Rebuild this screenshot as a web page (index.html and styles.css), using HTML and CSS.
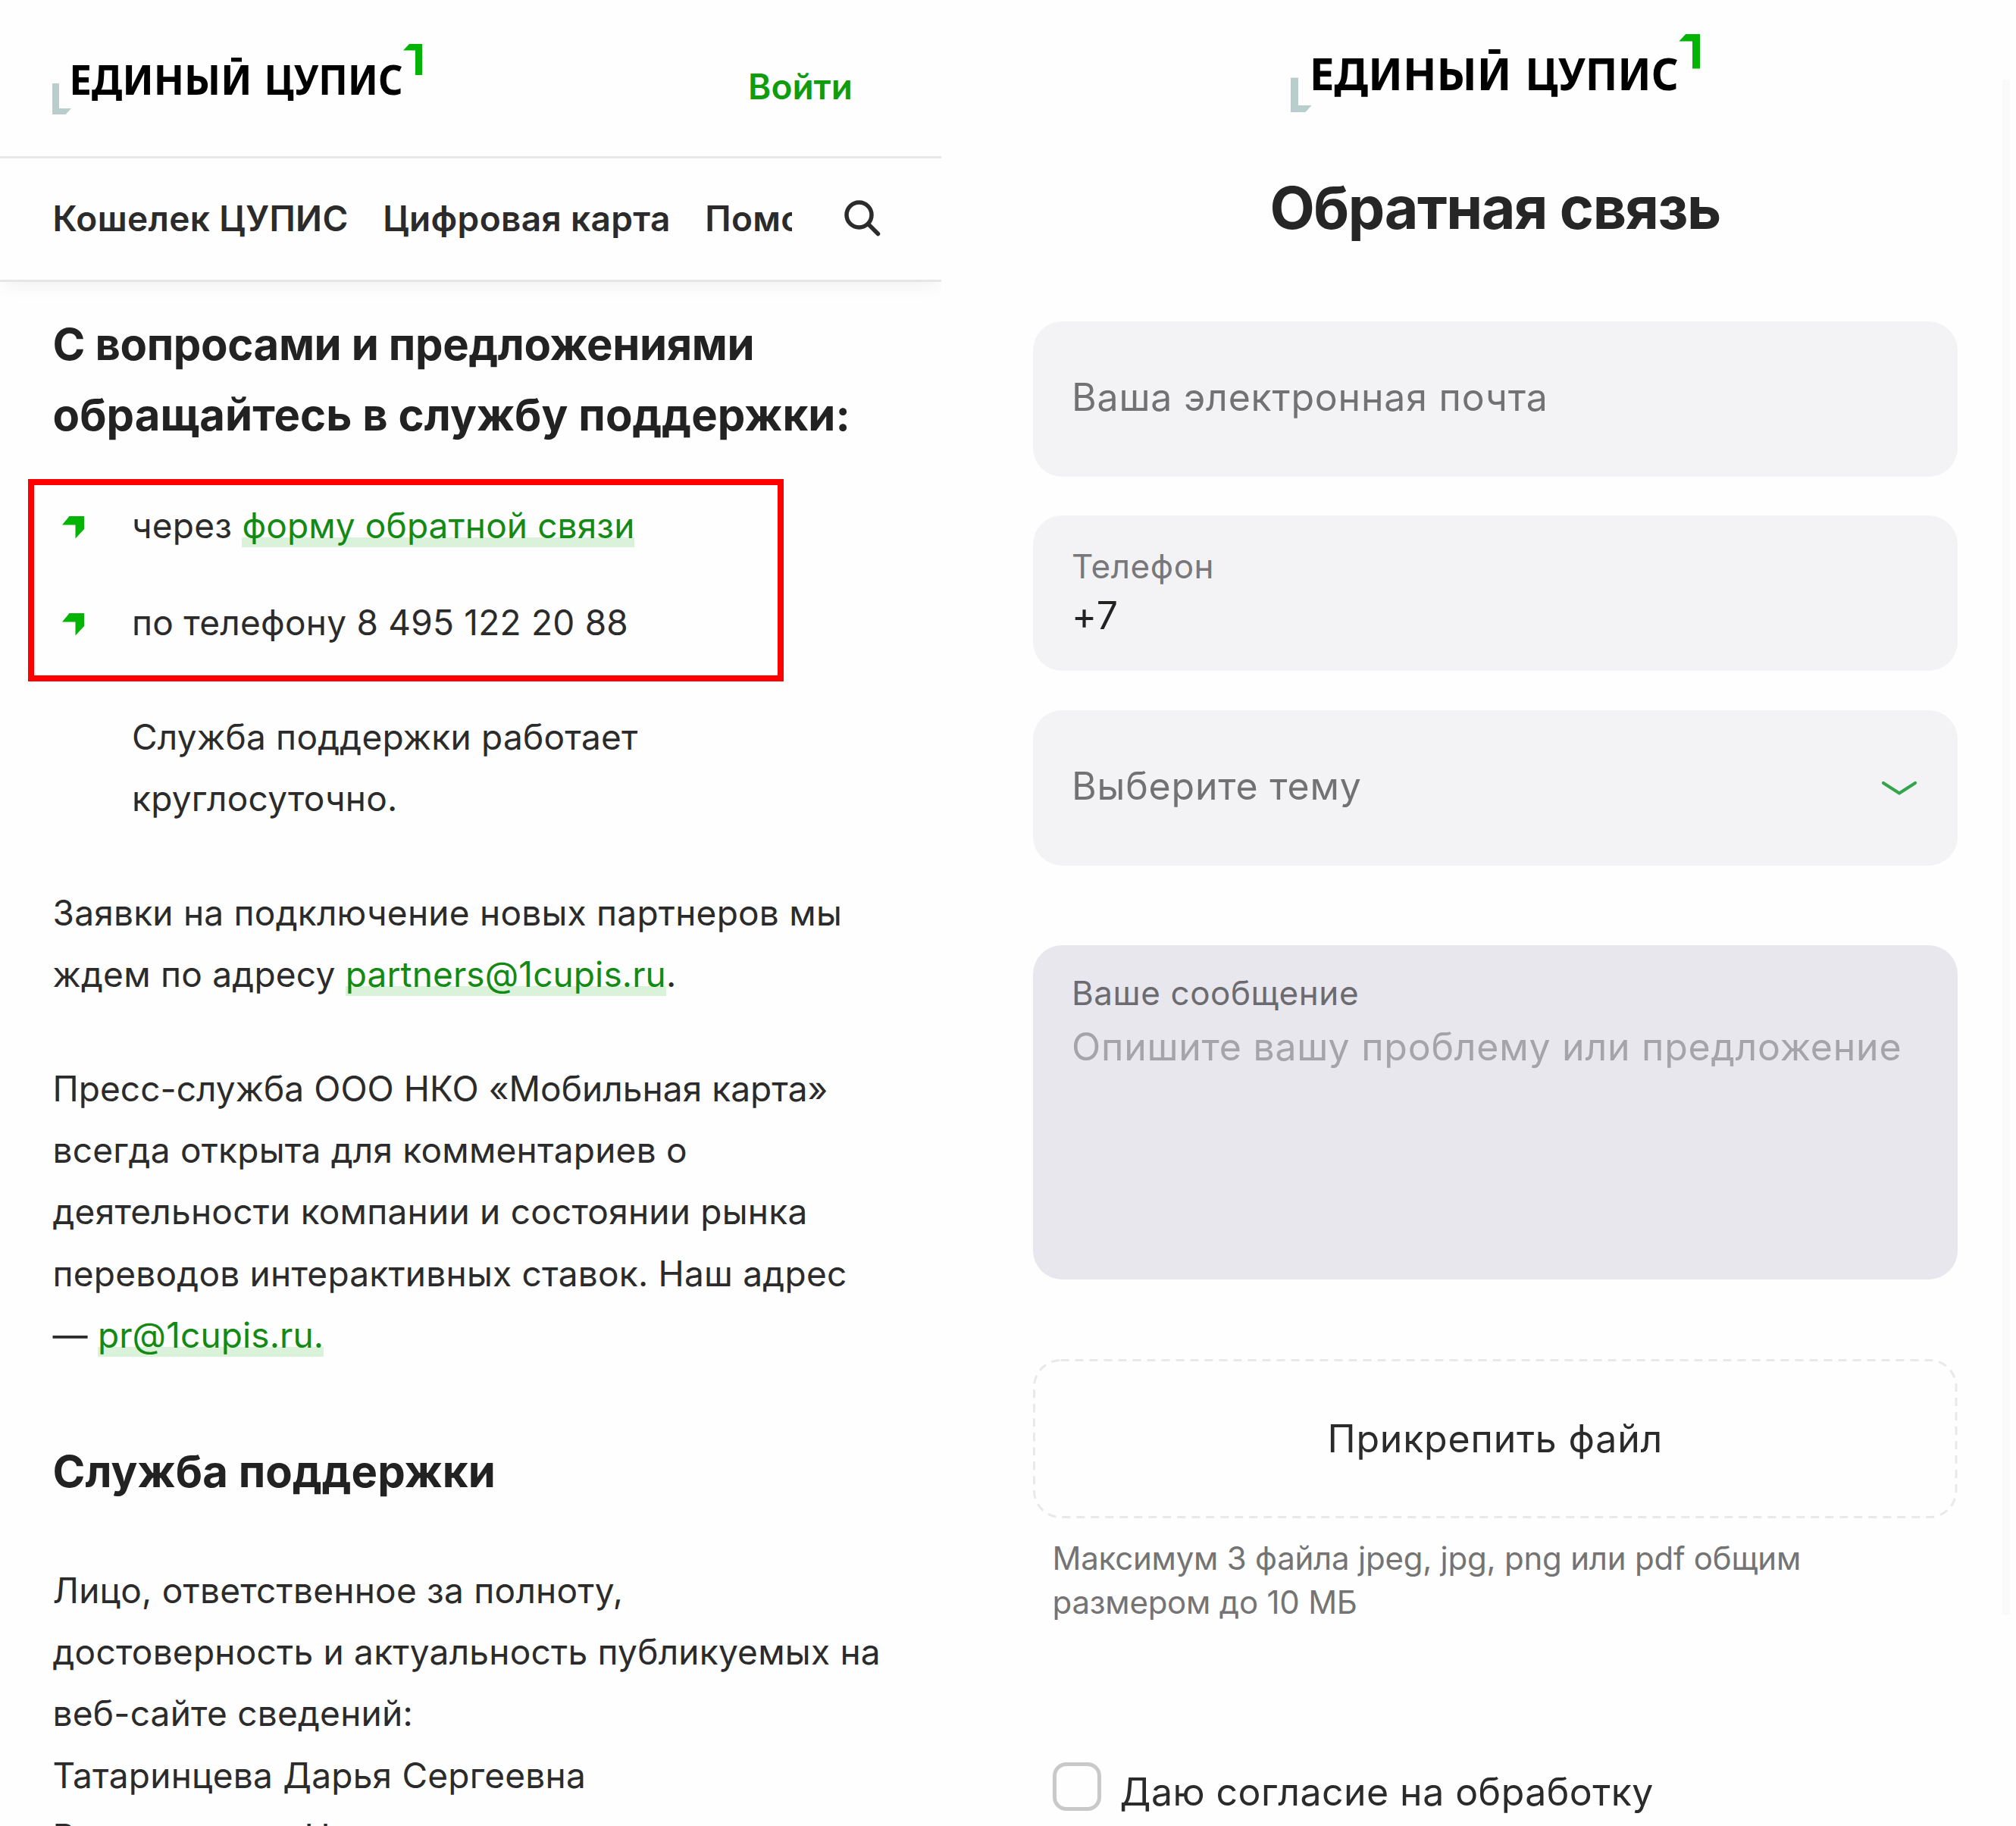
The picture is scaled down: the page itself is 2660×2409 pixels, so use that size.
FILE: index.html
```html
<!DOCTYPE html>
<html lang="ru">
<head>
<meta charset="utf-8">
<title>Единый ЦУПИС</title>
<link rel="stylesheet" href="styles.css">
</head>
<body>
<svg class="sprite" aria-hidden="true">
  <symbol id="logo" viewBox="0 0 488 93">
    <path fill="#b9cdcd" d="M0 52h9v33h16l-7.500 8H0z"/>
    <text class="logo-text" x="22.500" y="66.500" textLength="241" lengthAdjust="spacingAndGlyphs">ЕДИНЫЙ</text>
    <text class="logo-text" x="279.500" y="66.500" textLength="183" lengthAdjust="spacingAndGlyphs">ЦУПИС</text>
    <!-- flat accent over the letter -->
    <path fill="#fefefe" d="M228 8h30v19h-30z"/>
    <path fill="#000" d="M236 18h14v5.500h-14z"/>
    <path fill="#04b404" d="M471 0h17v41h-9V8.500h-16z"/>
  </symbol>
  <symbol id="marker" viewBox="0 0 30 30">
    <path fill="#04b404" d="M0 11.500 9.500 0H29v17L17.500 29.500V11.500z"/>
  </symbol>
</svg>
<div class="screens">
  <section class="info">
    <header class="topbar">
      <svg class="logo"><use href="#logo"/></svg>
      <a class="login">Войти</a>
    </header>
    <nav class="nav">
      <div class="nav-items">
        <a>Кошелек ЦУПИС</a>
        <a>Цифровая карта</a>
        <a>Помощь</a>
      </div>
      <svg class="search" viewBox="0 0 48 48" fill="none" stroke="#2b2b2b" stroke-width="5.500" stroke-linecap="round"><circle cx="19.500" cy="19.500" r="16.500"/><path d="M31.500 31.500 44.500 44.500"/></svg>
    </nav>
    <main class="content">
      <h2><span class="tight">С вопросами и предложениями</span><br>обращайтесь в службу поддержки:</h2>
      <ul class="contacts">
        <li><svg class="marker"><use href="#marker"/></svg><span>через <a class="link">форму обратной связи</a></span></li>
        <li><svg class="marker"><use href="#marker"/></svg><span>по телефону 8 495 122 20 88</span></li>
      </ul>
      <p class="note">Служба поддержки работает<br>круглосуточно.</p>
      <p>Заявки на подключение новых партнеров мы<br>ждем по адресу <a class="link">partners@1cupis.ru</a>.</p>
      <p><span class="natural">Пресс-служба ООО НКО «Мобильная карта»</span><br>всегда открыта для комментариев о<br>деятельности компании и состоянии рынка<br>переводов интерактивных ставок. Наш адрес<br>— <a class="link">pr@1cupis.ru.</a></p>
      <h2 class="second">Служба поддержки</h2>
      <p>Лицо, ответственное за полноту,<br>достоверность и актуальность публикуемых на<br>веб-сайте сведений:<br>Татаринцева Дарья Сергеевна<br>Руководитель Н</p>
    </main>
  </section>
  <section class="feedback">
    <svg class="logo logo-large"><use href="#logo"/></svg>
    <h1>Обратная связь</h1>
    <form class="form">
      <div class="field"><span class="placeholder">Ваша электронная почта</span></div>
      <div class="field filled"><span class="label">Телефон</span><span class="value">+7</span></div>
      <div class="field"><span class="placeholder">Выберите тему</span>
        <svg class="chevron" viewBox="0 0 48 22" fill="none" stroke="#33a64c" stroke-width="4.200" stroke-linecap="round" stroke-linejoin="round"><path d="M3 4 24 17.500 45 4"/></svg></div>
      <div class="message"><span class="label">Ваше сообщение</span><span class="hint-text">Опишите вашу проблему или предложение</span></div>
      <div class="upload">
        <svg class="dashes" fill="none" stroke="#e9e9e9" stroke-width="3" stroke-dasharray="11 8"><rect x="1.500" y="1.500" width="1216.500" height="207" rx="35"/></svg>
        <span>Прикрепить файл</span>
      </div>
      <p class="limits">Максимум 3 файла jpeg, jpg, png или pdf общим<br>размером до 10 МБ</p>
      <label class="consent"><span class="checkbox"></span><span class="consent-text">Даю согласие на обработку</span></label>
    </form>
    <div class="scrollbar"></div>
  </section>
</div>
</body>
</html>
```

FILE: styles.css
```css
* { box-sizing: border-box; }
html, body { margin: 0; height: 2409px; overflow: hidden; }
body {
  background: #fefefe;
  color: #2b2b2b;
  font-family: Inter, "Liberation Sans", sans-serif;
}
h1, h2, p, ul { margin: 0; padding: 0; }
.sprite { position: absolute; width: 0; height: 0; }
.screens { display: flex; height: 2409px; overflow: hidden; }

.logo { display: block; width: 488px; height: 93px; flex: none; }
.logo-large { width: 540px; height: 103px; }
.logo-text { font: 700 53px "Noto Sans", sans-serif; fill: #000; }

/* Left screen: contacts page */
.info { width: 1242px; flex: none; }
.topbar {
  display: flex;
  justify-content: space-between;
  align-items: flex-start;
  height: 209px;
  padding: 58px 117px 0 69px;
  border-bottom: 3px solid #e8e8e8;
}
.login {
  margin-top: 27px;
  line-height: 58px;
  font-size: 46px;
  font-weight: 600;
  color: #0f9d0f;
}
.nav {
  display: flex;
  align-items: center;
  justify-content: space-between;
  height: 163px;
  padding: 0 80px 2px 69.500px;
  border-bottom: 3px solid #e6e6e6;
  box-shadow: 0 14px 20px -6px rgba(0, 0, 0, .045);
  clip-path: inset(0 0 -60px 0);
}
.nav-items {
  display: flex;
  gap: 45.500px;
  width: 975.500px;
  overflow: hidden;
  white-space: nowrap;
  font-size: 46px;
  font-weight: 600;
  line-height: 70px;
  letter-spacing: .0075em;
}
.search { width: 48px; height: 48px; flex: none; }
.content { padding: 36px 0 0 69.500px; font-size: 46px; line-height: 81.400px; letter-spacing: .005em; white-space: nowrap; }
h2 { font-size: 58px; line-height: 93px; font-weight: 700; letter-spacing: .001em; color: #222; }
.tight { letter-spacing: -.0064em; }
.natural { letter-spacing: .001em; }
.contacts {
  display: flex;
  flex-direction: column;
  gap: 46.600px;
  width: 997px;
  height: 267px;
  margin: 38px 0 33px -32.500px;
  padding: 12.600px 0 0 37px;
  border: 8px solid #f00;
  list-style: none;
}
.contacts li { display: flex; align-items: center; gap: 62px; }
.marker { width: 30px; height: 30px; margin-top: 6px; flex: none; }
.content p + p { margin-top: 69px; }
.content .note { padding-left: 104.500px; }
.content .second { margin: 92px 0 70px; }
.link {
  letter-spacing: .0025em;
  color: #138a13;
  background: linear-gradient(#d9f2d9, #d9f2d9) 0 100% / 100% 13px no-repeat;
  padding-bottom: 1px;
}

/* Right screen: feedback form */
.feedback {
  position: relative;
  flex: 1;
  display: flex;
  flex-direction: column;
  align-items: center;
  padding: 45px 78px 0 121px;
}
h1 { margin-top: 79px; font-size: 77px; line-height: 94px; font-weight: 700; letter-spacing: -.019em; color: #262626; }
.form { width: 1219.500px; margin: 102.500px 0 0; display: flex; flex-direction: column; }
.field {
  display: flex;
  align-items: center;
  justify-content: space-between;
  height: 205px;
  margin-bottom: 51.900px;
  padding: 0 53px 5px 51px;
  border-radius: 38px;
  background: #f3f3f6;
}
.field.filled, .message { flex-direction: column; align-items: flex-start; justify-content: flex-start; }
.field.filled { padding-top: 37px; }
.placeholder, .value, .hint-text, .upload { font-size: 50px; line-height: 70px; letter-spacing: .016em; color: #727275; }
.label { font-size: 44px; line-height: 60px; letter-spacing: .0125em; color: #78787b; }
.value { color: #222; }
.chevron { width: 48px; height: 22px; margin-top: 5px; }
.message {
  display: flex;
  height: 441.500px;
  margin-top: 52.500px;
  padding: 33.500px 50px 0 51px;
  border-radius: 38px;
  background: #e8e7ed;
}
.message .label { color: #6c6c70; }
.hint-text { margin-top: 6px; color: #a4a4a9; letter-spacing: .015em; white-space: nowrap; }
.upload {
  position: relative;
  display: flex;
  align-items: center;
  justify-content: center;
  height: 210px;
  margin-top: 104.500px;
  color: #2b2b2b;
}
.dashes { position: absolute; inset: 0; width: 100%; height: 100%; }
.limits { margin: 24.500px 0 0 25.500px; font-size: 42px; line-height: 57.600px; letter-spacing: -.0055em; color: #747474; white-space: nowrap; }
.consent { display: flex; align-items: flex-start; gap: 25px; margin: 182.500px 0 0 25.500px; }
.checkbox { width: 64px; height: 64px; border: 5px solid #c9c9c9; border-radius: 18px; flex: none; }
.consent-text { margin-top: 7px; font-size: 50px; line-height: 64px; letter-spacing: .009em; white-space: nowrap; }
.scrollbar { position: absolute; right: 9px; top: 105px; width: 10px; height: 2025px; background: #fafafa; }
```
